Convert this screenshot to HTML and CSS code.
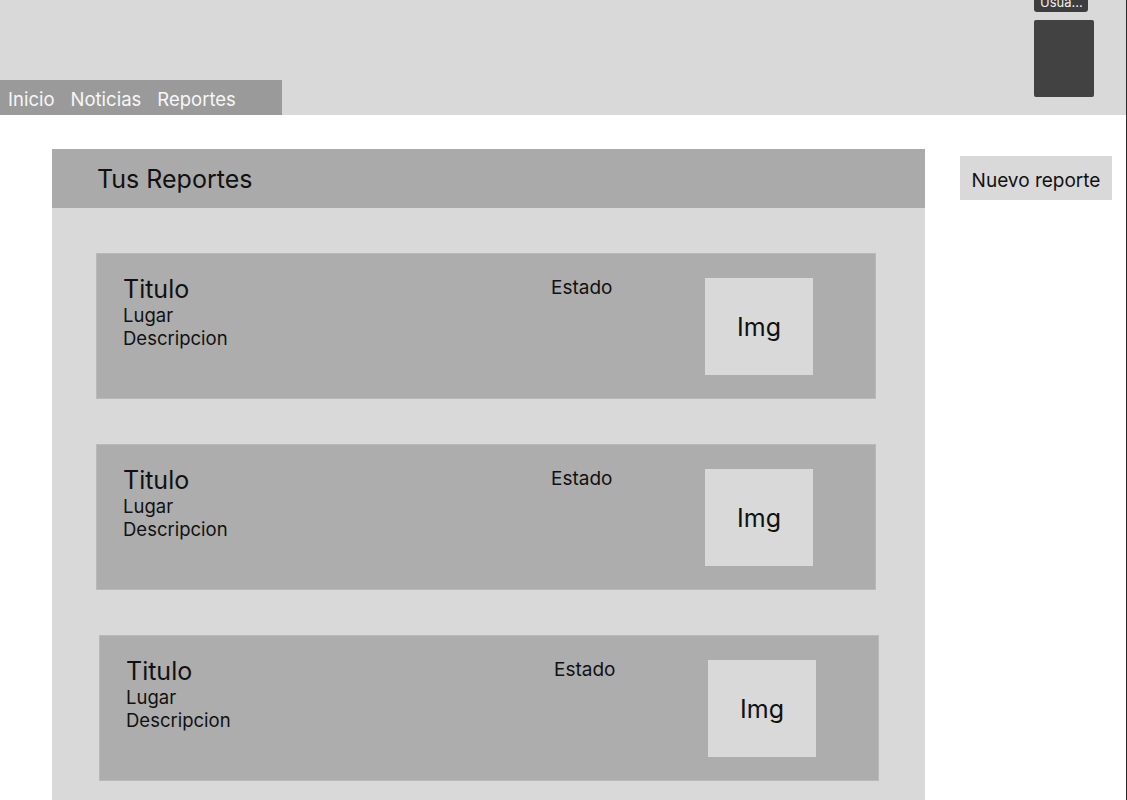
FILE: index.html
```html
<!DOCTYPE html>
<html lang="es">
<head>
    <meta charset="UTF-8">
    <meta name="viewport" content="width=device-width, initial-scale=1.0">
    <title>Tus Reportes</title>
    <link rel="stylesheet" href="styles.css">
</head>
<body>
    <div class="page">
        <header class="top-bar">
            <nav class="nav">
                <a href="#" class="nav-link">Inicio</a>
                <a href="#" class="nav-link">Noticias</a>
                <a href="#" class="nav-link">Reportes</a>
            </nav>
            <div class="user">
                <span class="user-badge">Usua...</span>
                <div class="user-avatar"></div>
            </div>
        </header>

        <main class="main">
            <section class="panel">
                <h1 class="panel-title">Tus Reportes</h1>

                <div class="report-list">
                    <article class="report-card">
                        <div class="report-info">
                            <h2 class="report-title">Titulo</h2>
                            <p>Lugar</p>
                            <p>Descripcion</p>
                        </div>
                        <div class="report-status">Estado</div>
                        <div class="report-img">Img</div>
                    </article>

                    <article class="report-card">
                        <div class="report-info">
                            <h2 class="report-title">Titulo</h2>
                            <p>Lugar</p>
                            <p>Descripcion</p>
                        </div>
                        <div class="report-status">Estado</div>
                        <div class="report-img">Img</div>
                    </article>

                    <article class="report-card shifted">
                        <div class="report-info">
                            <h2 class="report-title">Titulo</h2>
                            <p>Lugar</p>
                            <p>Descripcion</p>
                        </div>
                        <div class="report-status">Estado</div>
                        <div class="report-img">Img</div>
                    </article>
                </div>
            </section>

            <button class="btn-new">Nuevo reporte</button>
        </main>
    </div>
</body>
</html>
```

FILE: styles.css
```css
:root {
    --light: #d9d9d9;
    --mid: #aaaaaa;
    --card: #adadad;
    --nav: #9a9a9a;
    --dark: #424242;
    --text: #111111;
}

* {
    box-sizing: border-box;
    margin: 0;
    padding: 0;
}

body {
    font-family: 'Inter', 'Liberation Sans', sans-serif;
    color: var(--text);
    background: white;
    overflow: hidden;
}

.page {
    width: 1127px;
    min-height: 100vh;
    border-right: 1px solid #2b2b2b;
}

/* Header */
.top-bar {
    height: 115px;
    background: var(--light);
    display: flex;
    justify-content: space-between;
    align-items: flex-end;
}

.nav {
    width: 282px;
    height: 35px;
    background: var(--nav);
    display: flex;
    gap: 16px;
    padding: 3px 0 0 8px;
}

.nav-link {
    color: #f7f7f7;
    text-decoration: none;
    font-size: 18.5px;
    line-height: 32px;
}

.user {
    align-self: flex-start;
    display: flex;
    flex-direction: column;
    align-items: flex-start;
    gap: 8px;
    margin: -8px 32px 0 0;
}

.user-badge {
    background: #3d3d3d;
    color: #f0f0f0;
    font-size: 13px;
    line-height: 20px;
    padding: 0 6px;
    border-radius: 3px;
    width: 54px;
    overflow: hidden;
    white-space: nowrap;
}

.user-avatar {
    width: 60px;
    height: 77px;
    background: var(--dark);
    border-radius: 2px;
}

/* Main */
.main {
    display: flex;
    align-items: flex-start;
    padding: 34px 0 0 52px;
}

.panel {
    width: 873px;
    background: var(--light);
    padding-bottom: 45px;
}

.panel-title {
    background: var(--mid);
    font-size: 25px;
    font-weight: 400;
    line-height: 57px;
    padding: 2px 0 0 45px;
}

.report-list {
    display: flex;
    flex-direction: column;
    gap: 45px;
    padding: 45px 0 0 44px;
}

.report-card {
    width: 780px;
    height: 146px;
    background: var(--card);
    border: 1px solid #b9b9b9;
    display: grid;
    grid-template-columns: 428px 154px 108px;
    align-items: start;
    padding: 20px 0 0 26px;
}

.report-card.shifted {
    margin-left: 3px;
}

.report-title {
    font-size: 25px;
    font-weight: 400;
    line-height: 30px;
}

.report-info p {
    font-size: 18.5px;
    line-height: 23px;
}

.report-status {
    font-size: 19px;
    line-height: 23px;
    margin-top: 2px;
}

.report-img {
    height: 97px;
    margin-top: 4px;
    background: var(--light);
    display: flex;
    align-items: center;
    justify-content: center;
    font-size: 25px;
}

.btn-new {
    margin: 7px 0 0 35px;
    width: 152px;
    height: 44px;
    background: var(--light);
    border: none;
    font-family: inherit;
    font-size: 19px;
    color: var(--text);
    padding-top: 5px;
}
```
